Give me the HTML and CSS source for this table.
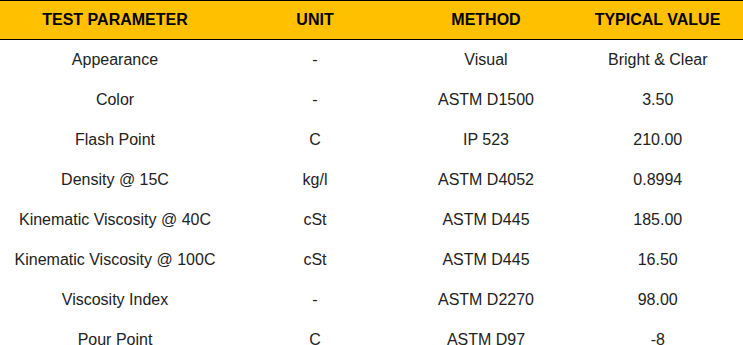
FILE: index.html
```html
<!DOCTYPE html>
<html>
<head>
<meta charset="utf-8">
<link rel="stylesheet" href="styles.css">
</head>
<body>
<table class="spec">
  <thead>
    <tr>
      <th class="c1">TEST PARAMETER</th>
      <th class="c2">UNIT</th>
      <th class="c3">METHOD</th>
      <th class="c4">TYPICAL VALUE</th>
    </tr>
  </thead>
  <tbody>
    <tr><td>Appearance</td><td>-</td><td>Visual</td><td>Bright &amp; Clear</td></tr>
    <tr><td>Color</td><td>-</td><td>ASTM D1500</td><td>3.50</td></tr>
    <tr><td>Flash Point</td><td>C</td><td>IP 523</td><td>210.00</td></tr>
    <tr><td>Density @ 15C</td><td>kg/l</td><td>ASTM D4052</td><td>0.8994</td></tr>
    <tr><td>Kinematic Viscosity @ 40C</td><td>cSt</td><td>ASTM D445</td><td>185.00</td></tr>
    <tr><td>Kinematic Viscosity @ 100C</td><td>cSt</td><td>ASTM D445</td><td>16.50</td></tr>
    <tr><td>Viscosity Index</td><td>-</td><td>ASTM D2270</td><td>98.00</td></tr>
    <tr><td>Pour Point</td><td>C</td><td>ASTM D97</td><td>-8</td></tr>
  </tbody>
</table>
</body>
</html>
```

FILE: styles.css
```css
html, body {
  margin: 0;
  padding: 0;
  background: #ffffff;
}
body {
  font-family: "Liberation Sans", Arial, sans-serif;
  font-size: 16px;
  color: #222222;
}
.spec {
  width: 743px;
  border-collapse: collapse;
  table-layout: fixed;
}
.spec .c1 { width: 230px; }
.spec .c2 { width: 170px; }
.spec .c3 { width: 172px; }
.spec .c4 { width: 171px; }
.spec th {
  background: #ffc000;
  color: #000000;
  font-weight: bold;
  height: 38px;
  padding: 0;
  border-top: 1px solid #000;
  border-bottom: 1px solid #000;
  text-align: center;
  vertical-align: middle;
}
.spec th.c4 {
  border-right: 1px solid #000;
}
.spec td {
  height: 40px;
  padding: 0;
  line-height: 18px;
  text-align: center;
  vertical-align: middle;
}
```
